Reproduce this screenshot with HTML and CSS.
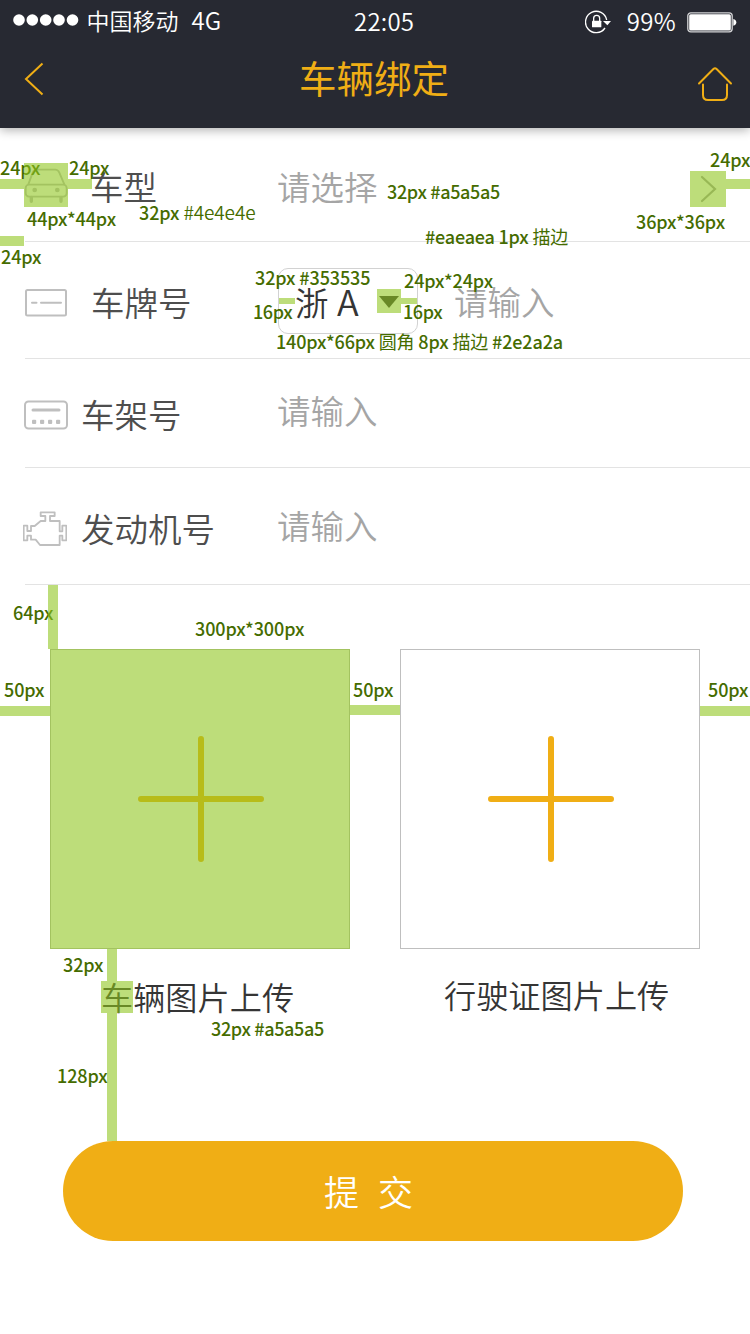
FILE: index.html
```html
<!DOCTYPE html>
<html lang="zh-CN">
<head>
<meta charset="utf-8">
<title>车辆绑定</title>
<link rel="stylesheet" href="styles.css">
</head>
<body>
<div class="screen">
  <header class="header">
    <div class="status">
      <div class="status-left">
        <svg class="signal" viewBox="0 0 66 12"><circle cx="6" cy="6" r="5.8"/><circle cx="19.3" cy="6" r="5.8"/><circle cx="32.7" cy="6" r="5.8"/><circle cx="46" cy="6" r="5.8"/><circle cx="59.5" cy="6" r="5.8"/></svg>
        <span class="carrier">中国移动</span><span class="network">4G</span>
      </div>
      <span class="time">22:05</span>
      <div class="status-right">
        <svg class="lock" viewBox="0 0 78 72"><path d="M60 54A32 32 0 1 1 65 30" fill="none" stroke="#fff" stroke-width="4"/><path d="M54 33H78L67 46Z" fill="#fff"/><rect x="21" y="32" width="28" height="20" rx="2" fill="#fff"/><path d="M26 34V25a9 9 0 0 1 18 0V34" fill="none" stroke="#fff" stroke-width="4"/></svg>
        <span class="percent">99%</span>
        <svg class="battery" viewBox="0 0 50 21"><rect x=".8" y=".8" width="44.4" height="19" rx="3" fill="none" stroke="#d4d4d6" stroke-width="1.3"/><rect x="2.2" y="2.2" width="41.6" height="16.2" rx="1.5" fill="#fff"/><path d="M46.3 7q3 .8 3 3.3t-3 3.5z" fill="#fff"/></svg>
      </div>
    </div>
    <nav class="nav">
      <svg class="back" viewBox="0 0 20 34"><path d="M18.5 1.5L2 17L18.5 32.5"/></svg>
      <h1 class="title">车辆绑定</h1>
      <svg class="home" viewBox="0 0 36 36"><path d="M2 17.5L16.4 3q1.6-1.4 3.2 0L34 17.5M6 18.5V29q0 5 5 5H25q5 0 5-5V18.5"/></svg>
    </nav>
  </header>

  <main>
    <section class="row row-model">
      <svg class="icon" viewBox="72 69 132 132"><path d="M85 133L98 98Q101 89 110 89H166Q174 89 178 98L193 133"/><rect x="77" y="134" width="123" height="36" rx="10"/><path class="wheel" d="M94 172V184M183 172V184"/><circle class="solid" cx="104" cy="150" r="7"/><circle class="solid" cx="172" cy="150" r="7"/></svg>
      <span class="label">车型</span>
      <span class="value">请选择</span>
      <svg class="more" viewBox="0 0 36 36"><path d="M12 6L25 18L12 30"/></svg>
    </section>
    <section class="row row-plate">
      <svg class="icon" viewBox="0 0 44 44"><g class="thin"><rect x="2" y="9" width="40" height="25.5" rx="1.5"/><path d="M8 21.7H12.5M17 21.7H37"/></g></svg>
      <span class="label">车牌号</span>
      <div class="province"><span>浙 <span class="letter">A</span></span><svg class="caret" viewBox="0 0 24 24"><path d="M2 7H22L12 19Z"/></svg></div>
      <span class="value">请输入</span>
    </section>
    <section class="row row-frame">
      <svg class="icon" viewBox="0 0 44 44"><g class="thin"><rect x="1" y="8.5" width="42" height="27" rx="3.5"/><path class="bar" d="M9 17H35"/></g><g class="solid"><rect x="8" y="26.8" width="4.2" height="4.2" rx="1"/><rect x="16" y="26.8" width="4.2" height="4.2" rx="1"/><rect x="24" y="26.8" width="4.2" height="4.2" rx="1"/><rect x="32" y="26.8" width="4.2" height="4.2" rx="1"/></g></svg>
      <span class="label">车架号</span>
      <span class="value">请输入</span>
    </section>
    <section class="row row-engine">
      <svg class="icon" viewBox="69 80 132 132"><path d="M122 96H164V107H150V122H179V153H187V136H199V180H187V166H179V194H120L107 178H93V166H82V180H71V136H82V152H93V137H104L122 122H136V107H122Z"/></svg>
      <span class="label">发动机号</span>
      <span class="value">请输入</span>
    </section>

    <section class="uploads">
      <figure class="upload">
        <div class="frame"><svg class="plus" viewBox="0 0 126 126"><path d="M63 3V123M3 63H123"/></svg></div>
        <figcaption class="caption">车辆图片上传</figcaption>
      </figure>
      <figure class="upload">
        <div class="frame"><svg class="plus" viewBox="0 0 126 126"><path d="M63 3V123M3 63H123"/></svg></div>
        <figcaption class="caption caption-license">行驶证图片上传</figcaption>
      </figure>
    </section>
    <button class="submit">提 交</button>
  </main>

  <!-- Spec annotations drawn over the form -->
  <div class="notes">
    <span class="note n-left">24px</span>
    <span class="note n-gap">24px</span>
    <span class="note n-icon">44px*44px</span>
    <span class="note n-label">32px <span class="regular">#4e4e4e</span></span>
    <span class="note n-inset">24px</span>
    <span class="note n-value">32px #a5a5a5</span>
    <span class="note n-right">24px</span>
    <span class="note n-more">36px*36px</span>
    <span class="note n-line">#eaeaea 1px <span class="cjk">描边</span></span>
    <span class="note n-province">32px #353535</span>
    <span class="note n-caret">24px*24px</span>
    <span class="note n-pad-l">16px</span>
    <span class="note n-pad-r">16px</span>
    <span class="note n-box">140px*66px <span class="cjk">圆角</span> 8px <span class="cjk">描边</span> #2e2a2a</span>
    <span class="note n-top">64px</span>
    <span class="note n-frame">300px*300px</span>
    <span class="note n-side-l">50px</span>
    <span class="note n-middle">50px</span>
    <span class="note n-side-r">50px</span>
    <span class="note n-below">32px</span>
    <span class="note n-caption">32px #a5a5a5</span>
    <span class="note n-submit">128px</span>
    <i class="mark m-left"></i><i class="mark m-icon"></i><i class="mark m-gap"></i><i class="mark m-inset"></i>
    <i class="mark m-more"></i><i class="mark m-right"></i>
    <i class="mark m-pad-l"></i><i class="mark m-caret"></i><i class="mark m-pad-r"></i>
    <i class="mark m-top"></i><i class="mark m-frame"></i>
    <i class="mark m-side-l"></i><i class="mark m-middle"></i><i class="mark m-side-r"></i>
    <i class="mark m-below"></i><i class="mark m-caption"></i><i class="mark m-submit"></i>
  </div>
</div>
</body>
</html>
```
FILE: styles.css
```css
* { box-sizing: border-box; }
body { margin: 0; background: #fff; font-family: "Noto Sans CJK SC", sans-serif; font-weight: 350; }
svg { display: block; flex: none; fill: none; }
.screen { position: relative; width: 750px; height: 1334px; overflow: hidden; background: #fff; }

.header { height: 128px; background: #272932; box-shadow: 0 2px 10px rgba(0, 0, 0, .32); }
.status { display: grid; grid-template-columns: 354px 1fr auto; height: 44px; padding: 0 13px 0 0; color: #fff; line-height: 42px; }
.status-left { display: flex; align-items: center; height: 40px; padding-left: 12.5px; font-size: 23px; line-height: 40px; }
.signal { width: 66px; height: 12px; margin-right: 8px; fill: #fff; }
.network { margin-left: 13px; font-size: 24px; }
.time { font-size: 24px; letter-spacing: .2px; }
.status-right { display: flex; align-items: center; height: 44px; }
.lock { width: 26px; height: 24px; margin-top: -1px; }
.percent { margin: 0 11px 2px 16px; font-size: 24px; letter-spacing: .3px; }
.battery { width: 50px; height: 21px; }
.nav { display: grid; grid-template-columns: 299px 1fr auto; height: 84px; padding: 0 17px 0 0; }
.back { width: 20px; height: 34px; margin: 18px 0 0 24px; stroke: #f0ae15; stroke-width: 2; }
.title { margin: 14px 0 0; color: #f0ae15; font-size: 37.5px; font-weight: 400; line-height: 38px; }
.home { width: 36px; height: 36px; margin-top: 22px; stroke: #f0ae15; stroke-width: 2; stroke-linecap: round; }

.row { display: flex; align-items: center; margin-left: 25px; border-bottom: 1px solid #e3e3e3; font-size: 33.5px; line-height: 34px; }
.row-model { height: 114px; }
.row-plate { height: 117px; }
.row-frame { height: 109px; }
.row-engine { height: 117px; }
.icon { width: 44px; height: 44px; margin-left: -1px; stroke: #bfbfbf; stroke-width: 5.5; stroke-linejoin: round; }
.icon .wheel { stroke-width: 10; stroke-linecap: round; }
.icon .solid { fill: #bfbfbf; stroke: none; }
.icon .thin { stroke-width: 2; stroke-linecap: round; }
.icon .bar { stroke-width: 3; }
.label { width: 197px; margin-left: 13px; padding-top: 1px; color: #4e4e4e; }
.value { margin-left: -1px; color: #a5a5a5; }
.row-model .icon { margin-top: 1px; }
.row-model .label { width: 188px; margin-left: 22px; padding-top: 3px; }
.row-model .value { padding-top: 3px; }
.row-model .more { width: 36px; height: 36px; margin: 9px 24px 0 auto; stroke: #a5a5a5; stroke-width: 2.2; stroke-linecap: round; }
.row-plate .icon { margin-top: 5px; }
.row-plate .label { width: 187px; margin-left: 23px; padding-top: 3px; }
.row-plate .value { margin-left: 0; padding-top: 1px; }
.row-frame .icon { margin-top: 3px; }
.row-frame .value { padding-bottom: 6px; }
.row-engine .icon { margin: 6px 0 0 -2px; }
.row-engine .label { margin-left: 14px; padding-top: 3px; }
.row-engine .value { padding-bottom: 3px; }
.province { display: flex; align-items: center; justify-content: space-between; width: 140px; height: 66px; margin: 2px 36px 0 0; padding: 0 16px; border: 1px solid #d2d2d2; border-radius: 10px; color: #353535; white-space: nowrap; }
.letter { margin-left: 1px; font-size: 36px; line-height: 34px; }
.caret { width: 24px; height: 24px; fill: #353535; }

.uploads { display: flex; gap: 50px; padding: 64px 50px 0; }
.upload { width: 300px; margin: 0; }
.frame { display: flex; align-items: center; justify-content: center; height: 300px; border: 1px solid #bfbfbf; }
.plus { width: 126px; height: 126px; margin-left: 2px; stroke: #f0ae15; stroke-width: 6; stroke-linecap: round; }
.caption { margin-top: 31px; padding-left: 51px; color: #353535; font-size: 32.2px; line-height: 32px; margin-bottom: 1px; }
.caption-license { margin-top: 29px; padding-left: 44px; }
.submit { display: block; width: 620px; height: 100px; margin: 128px 0 0 63px; padding: 0 9px 1px 0; border: 0; border-radius: 50px; background: #f0ae15; color: #fff; font: 350 35px/40px "Noto Sans CJK SC", sans-serif; word-spacing: 11px; }

/* Annotation layer */
.notes { position: absolute; inset: 0; }
.note { position: absolute; color: #456c00; font-size: 18px; font-weight: 500; line-height: 24px; letter-spacing: -.12px; white-space: nowrap; }
.regular { font-size: 19px; font-weight: 350; }
.cjk { font-weight: 400; }
.mark { position: absolute; background: rgba(143, 197, 29, .59); }
.n-left { left: 0; top: 155px; }
.n-gap { left: 69px; top: 155px; }
.n-icon { left: 27px; top: 206px; }
.n-label { left: 139px; top: 200px; }
.n-inset { left: 1px; top: 244px; }
.n-value { left: 387px; top: 179px; letter-spacing: -.34px; }
.n-right { left: 710px; top: 147px; }
.n-more { left: 636px; top: 209px; }
.n-line { left: 425px; top: 224px; letter-spacing: -.2px; }
.n-province { left: 255px; top: 265px; }
.n-caret { left: 404px; top: 268px; }
.n-pad-l { left: 253px; top: 299px; letter-spacing: -.4px; }
.n-pad-r { left: 403px; top: 299px; letter-spacing: -.4px; }
.n-box { left: 276px; top: 329px; letter-spacing: -.15px; }
.n-top { left: 13px; top: 600px; }
.n-frame { left: 195px; top: 616px; }
.n-side-l { left: 4px; top: 677px; }
.n-middle { left: 353px; top: 677px; }
.n-side-r { left: 708px; top: 677px; }
.n-below { left: 63px; top: 952px; }
.n-caption { left: 211px; top: 1016px; letter-spacing: -.34px; }
.n-submit { left: 57px; top: 1063px; }
.m-left { left: 0; top: 179px; width: 24px; height: 10px; }
.m-icon { left: 24px; top: 163px; width: 44px; height: 44px; }
.m-gap { left: 68px; top: 179px; width: 24px; height: 10px; }
.m-inset { left: 0; top: 236px; width: 24px; height: 10px; }
.m-more { left: 690px; top: 171px; width: 36px; height: 36px; }
.m-right { left: 726px; top: 179px; width: 24px; height: 10px; }
.m-pad-l { left: 279px; top: 298px; width: 16px; height: 6px; }
.m-caret { left: 377px; top: 289px; width: 24px; height: 24px; }
.m-pad-r { left: 401px; top: 298px; width: 16px; height: 6px; }
.m-top { left: 48px; top: 585px; width: 10px; height: 64px; }
.m-frame { left: 50px; top: 649px; width: 300px; height: 300px; }
.m-side-l { left: 0; top: 706px; width: 50px; height: 10px; }
.m-middle { left: 350px; top: 705px; width: 50px; height: 10px; }
.m-side-r { left: 700px; top: 706px; width: 50px; height: 10px; }
.m-below { left: 107px; top: 949px; width: 10px; height: 32px; }
.m-caption { left: 101px; top: 981px; width: 32px; height: 32px; }
.m-submit { left: 107px; top: 1013px; width: 10px; height: 128px; }
```
